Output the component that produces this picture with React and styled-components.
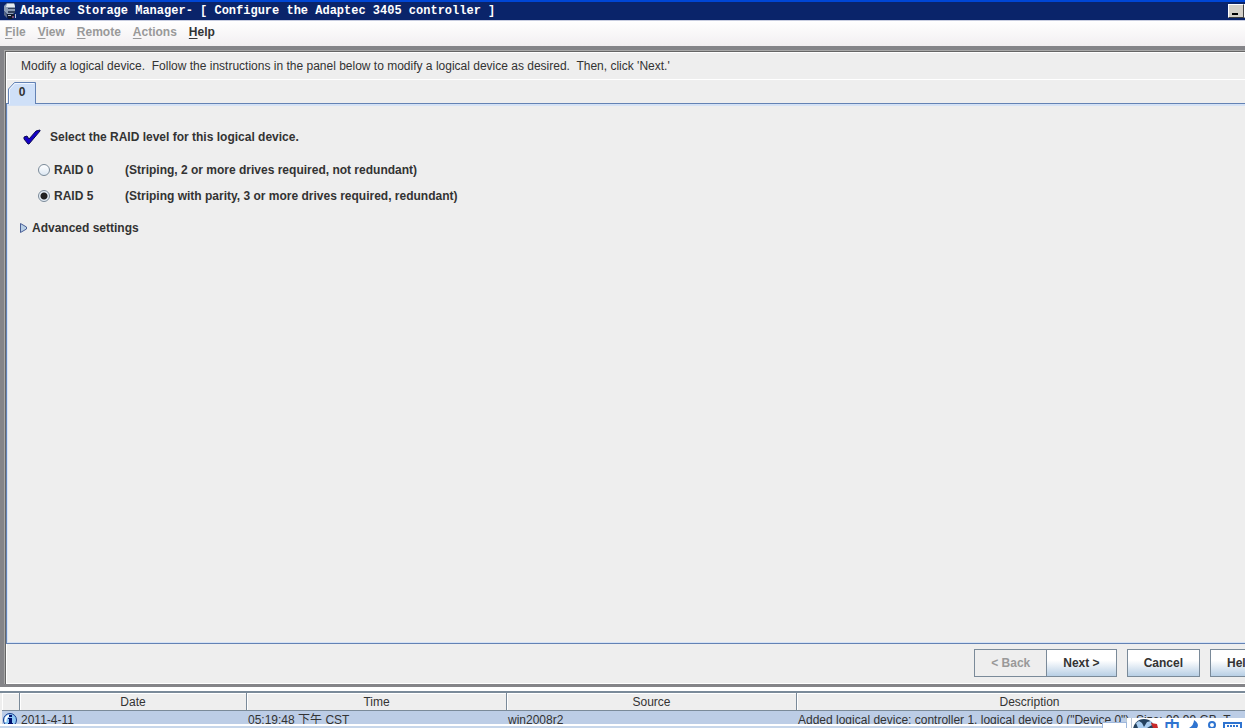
import React, { useState } from "react";
import styled, { createGlobalStyle } from "styled-components";

const menus = ["File", "View", "Remote", "Actions", "Help"];

const levels = [
    { id: "raid0", name: "RAID 0", text: "(Striping, 2 or more drives required, not redundant)" },
    { id: "raid5", name: "RAID 5", text: "(Striping with parity, 3 or more drives required, redundant)" },
];

const events = [
    {
        date: "2011-4-11",
        time: "05:19:48 下午 CST",
        source: "win2008r2",
        description: "Added logical device: controller 1, logical device 0 (\"Device 0\"). Size: 99.99 GB, T",
    },
];

const AppIcon = () => (
    <svg width="16" height="16" viewBox="0 0 16 16" aria-hidden="true">
        <path d="M2 3l3-3h7l1 2v7l-2 2H5L2 8z" fill="#8d9db5" />
        <path d="M5 1h7l1 3H4z" fill="#e6ebf2" />
        <path d="M6 5h7v1H6zM6 8h7v2H6z" fill="#35425e" />
        <path d="M2 8l3 4v3l-3-3z" fill="#5c6b86" />
        <path d="M5 11h7v2l-2 3H6z" fill="#141a2c" />
        <path d="M6 12h3v1H6zM13 11h1v4h-1z" fill="#b9c2d3" />
        <path d="M10 13h2v2h-2z" fill="#7b4870" />
    </svg>
);

const CheckIcon = () => (
    <svg width="18" height="16" viewBox="0 0 18 16" aria-hidden="true">
        <path d="M1 8l3-1 2 3 7-8 4-1v1L6 15H5L1 10z" fill="#1400c8" stroke="#0a0a50" />
    </svg>
);

const ArrowIcon = () => (
    <svg width="8" height="10" viewBox="0 0 8 10" aria-hidden="true">
        <path d="M0.5 0.5L6.5 4v2L0.5 9.5z" fill="#b8cfe5" stroke="#4a5f96" />
    </svg>
);

const InfoIcon = () => (
    <svg width="14" height="14" viewBox="0 0 14 14" aria-hidden="true">
        <circle cx="7" cy="7" r="6.5" fill="#8cc8f5" stroke="#173a8c" />
        <path d="M2.5 9Q2 4 6 2.5" fill="none" stroke="#ffffff" strokeWidth="2" />
        <path d="M6 2h3v2H6zM5 5h4v5h1v2H5v-2h1V6H5z" fill="#00106e" />
    </svg>
);

const GlobeIcon = () => (
    <svg width="33" height="10" viewBox="0 0 33 10" aria-hidden="true">
        <path d="M0.5 0v10" stroke="#b8c4d4" />
        <circle cx="13" cy="12" r="11" fill="#24425f" />
        <path d="M5 5l3-2 3 2 2 4 3-5 4-1 1 4-5 3H7z" fill="#a9cdf0" />
        <path d="M20 5l6 1 1 4h-5z" fill="#c92a2a" />
    </svg>
);

const TrayIcons = () => (
    <svg width="65" height="10" viewBox="0 0 65 10" aria-hidden="true">
        <path d="M14 2q6 4 3 8H9q5-3 5-8z" fill="#2f74d0" />
        <circle cx="32" cy="7" r="3" fill="none" stroke="#2f74d0" strokeWidth="2" />
        <path d="M44 10V5h17v5" fill="none" stroke="#2f74d0" strokeWidth="2" />
        <path d="M47 8h12" stroke="#2f74d0" strokeWidth="2" strokeDasharray="2 1" />
    </svg>
);

const App = () => {
    const [level, setLevel] = useState("raid5");

    return (
        <Viewport>
            <GlobalStyle />
            <Shell>
                <TitleBar>
                    <AppIcon />
                    <Title>Adaptec Storage Manager- [ Configure the Adaptec 3405 controller ]</Title>
                    <WindowButton aria-label="Minimize"><Dash /></WindowButton>
                    <WindowButton aria-label="Maximize" />
                </TitleBar>
                <MenuBar>
                    {menus.map((menu) => (
                        <MenuButton key={menu} disabled={menu !== "Help"}>
                            <u>{menu[0]}</u>{menu.slice(1)}
                        </MenuButton>
                    ))}
                </MenuBar>
                <Wizard>
                    <Message>
                        Modify a logical device.&nbsp; Follow the instructions in the panel below to modify
                        a logical device as desired.&nbsp; Then, click 'Next.'
                    </Message>
                    <Tabs role="tablist">
                        <Tab role="tab" aria-selected="true">
                            <TabShape width="28" height="23" viewBox="0 0 28 23" aria-hidden="true">
                                <path d="M0.5 22V7L6.5 0.5H27.5V22" fill="#cfe0f8" stroke="#6382b4" />
                                <path d="M1 21h26v2H1z" fill="#cfe0f8" />
                                <path d="M1.5 22V7.5L7 1.5H26" fill="none" stroke="#f0f6ff" />
                            </TabShape>
                            <TabLabel>0</TabLabel>
                        </Tab>
                    </Tabs>
                    <Pane role="tabpanel">
                        <Heading>
                            <CheckIcon />
                            <span>Select the RAID level for this logical device.</span>
                        </Heading>
                        {levels.map((item) => (
                            <Level key={item.id}>
                                <Radio
                                    type="radio"
                                    name="level"
                                    checked={level === item.id}
                                    onChange={() => setLevel(item.id)}
                                />
                                <LevelName>{item.name}</LevelName>
                                <span>{item.text}</span>
                            </Level>
                        ))}
                        <Advanced>
                            <ArrowIcon />
                            Advanced settings
                        </Advanced>
                    </Pane>
                    <Footer>
                        <Pair>
                            <Button disabled>&lt; Back</Button>
                            <Button>Next &gt;</Button>
                        </Pair>
                        <Button>Cancel</Button>
                        <Button>Help</Button>
                    </Footer>
                </Wizard>
                <Log>
                    <Table>
                        <colgroup>
                            <Col $width={18} />
                            <Col $width={227} />
                            <Col $width={260} />
                            <Col $width={290} />
                            <col />
                        </colgroup>
                        <thead>
                            <tr>
                                <th aria-label="Type" />
                                <th>Date</th>
                                <th>Time</th>
                                <th>Source</th>
                                <th>Description</th>
                            </tr>
                        </thead>
                        <tbody>
                            {events.map((event) => (
                                <tr key={event.time}>
                                    <td><InfoIcon /></td>
                                    <td>{event.date}</td>
                                    <td>{event.time}</td>
                                    <td>{event.source}</td>
                                    <td>{event.description}</td>
                                </tr>
                            ))}
                        </tbody>
                    </Table>
                </Log>
                <Taskbar />
            </Shell>
            <TrayEdge />
            <Tray>
                <GlobeIcon />
                <InputMode>中</InputMode>
                <TrayIcons />
            </Tray>
        </Viewport>
    );
};

export default App;

const GlobalStyle = createGlobalStyle`
  body {
    margin: 0;
    background: #eeeeee;
    color: #333333;
    font-family: "Liberation Sans", "Noto Sans CJK SC", sans-serif;
    font-size: 12px;
    line-height: 16px;
  }

  * {
    box-sizing: border-box;
  }

  svg {
    display: block;
    flex: none;
  }

  button {
    font: inherit;
    color: inherit;
  }
`

const Viewport = styled.div`
  position: relative;
  height: 100vh;
  overflow: hidden;
`

/* the window runs a little past the right edge of the screen */
const Shell = styled.div`
  display: flex;
  flex-direction: column;
  width: calc(100% + 35px);
  height: 100%;
`

const TitleBar = styled.header`
  display: flex;
  align-items: center;
  height: 21px;
  padding: 0 20px 0 2px;
  background: #0a246a;
  border-top: 2px solid #0046d5;
  border-bottom: 1px solid #c8cde0;
`

const Title = styled.h1`
  flex: 1;
  margin: 0 0 0 2px;
  color: #ffffff;
  font-family: "Liberation Mono", monospace;
  font-size: 12px;
`

const WindowButton = styled.button`
  display: flex;
  align-items: flex-end;
  width: 16px;
  height: 14px;
  padding: 0 0 2px 3px;
  background: #d4d0c8;
  border: 1px solid;
  border-color: #ffffff #404040 #404040 #ffffff;
`

const Dash = styled.span`
  width: 6px;
  height: 2px;
  background: #000000;
`

const MenuBar = styled.nav`
  display: flex;
  gap: 12px;
  height: 25px;
  padding: 0 5px;
  background: linear-gradient(#ffffff, #f2eff1);
`

const MenuButton = styled.button`
  height: 22px;
  padding: 0;
  background: none;
  border: none;
  font-weight: bold;

  u {
    text-underline-offset: 2px;
  }

  &:disabled {
    color: #999999;
  }
`

const Wizard = styled.main`
  display: flex;
  flex: 1;
  flex-direction: column;
  min-height: 0;
  padding: 2px 0 0 2px;
  border: solid #848488;
  border-width: 4px 0 3px 4px;
  box-shadow: inset 1px 1px #a8a8a8, inset 2px 2px #666666, inset 3px 3px #ffffff;
`

const Message = styled.p`
  height: 28px;
  margin: 0;
  padding: 6px 15px;
  border-bottom: 1px solid #ffffff;
`

const Tabs = styled.div`
  height: 23px;
  padding: 2px 0 0 2px;
`

/* sits over the top border of the pane */
const Tab = styled.button`
  position: relative;
  display: grid;
  justify-items: center;
  width: 28px;
  height: 23px;
  padding: 0;
  background: none;
  border: none;
  font-weight: bold;

  > * {
    grid-area: 1 / 1;
  }
`

const TabShape = styled.svg`
  place-self: start;
`

const TabLabel = styled.span`
  align-self: start;
  padding-top: 2px;
`

const Pane = styled.section`
  flex: 1;
  min-height: 0;
  padding: 21px 13px;
  border: 1px solid #6382b4;
  border-right: none;
  box-shadow: inset 1px 2px #d5e2f5, inset 0 -1px #d5e2f5;
  font-weight: bold;
`

const Heading = styled.div`
  display: flex;
  align-items: center;
  gap: 9px;
  padding: 4px 0 4px 3px;
  margin-bottom: 8px;
`

const Level = styled.label`
  display: flex;
  align-items: center;
  height: 26px;
  padding-left: 18px;
`

const Radio = styled.input`
  appearance: none;
  width: 12px;
  height: 12px;
  margin: 0 4px 0 0;
  border: 1px solid #7a8a99;
  border-radius: 50%;
  background: linear-gradient(#ffffff, #dde8f3);

  &:checked {
    background: radial-gradient(circle, #222222 3px, #e6eef7 4px);
  }
`

const LevelName = styled.span`
  width: 71px;
`

const Advanced = styled.button`
  display: flex;
  align-items: center;
  gap: 4px;
  margin-top: 11px;
  padding: 0;
  background: none;
  border: none;
`

const Footer = styled.footer`
  display: flex;
  justify-content: flex-end;
  gap: 10px;
  height: 40px;
  padding: 5px 10px 0 0;
  border-bottom: 1px solid #ffffff;
`

const Pair = styled.div`
  display: flex;
`

const Button = styled.button`
  height: 28px;
  padding: 0 16px;
  background: linear-gradient(#ffffff, #ffffff 40%, #b8cfe5);
  border: 1px solid #7a8a99;
  font-weight: bold;

  &:disabled {
    color: #999999;
    background: #eeeeee;
    border-right: none;
  }
`

const Log = styled.section`
  height: 33px;
  margin-top: 4px;
  padding-left: 2px;
  overflow: hidden;
  border-top: 2px solid #7a8a99;
  box-shadow: 0 -4px #ffffff;
`

const Table = styled.table`
  width: calc(100% - 17px);
  table-layout: fixed;
  border-collapse: separate;
  border-spacing: 0;

  th {
    height: 18px;
    padding: 0;
    border: solid #7a8a99;
    border-width: 0 1px 1px 0;
    box-shadow: inset 1px 1px #ffffff;
    font-weight: normal;
  }

  td {
    height: 18px;
    padding: 0 0 0 1px;
    background: #bccde6;
    overflow: hidden;
    white-space: nowrap;
  }
`

const Col = styled.col`
  width: ${({ $width }) => $width}px;
`

const Taskbar = styled.div`
  height: 4px;
  background: #c6d6ea;
  border-top: 2px solid #ffffff;
`

/* language bar floating over the bottom right corner */
const Tray = styled.div`
  position: absolute;
  right: 0;
  bottom: 0;
  display: flex;
  width: 118px;
  height: 10px;
  padding-left: 4px;
  background: #ffffff;
  overflow: hidden;
`

const InputMode = styled.span`
  color: #2f74d0;
  font-size: 16px;
  font-weight: bold;
  line-height: 20px;
`

const TrayEdge = styled.div`
  position: absolute;
  right: 118px;
  bottom: 0;
  width: 25px;
  height: 6px;
  background: #ffffff;
  border: 1px solid #9fb8dc;
  border-bottom: none;
`
